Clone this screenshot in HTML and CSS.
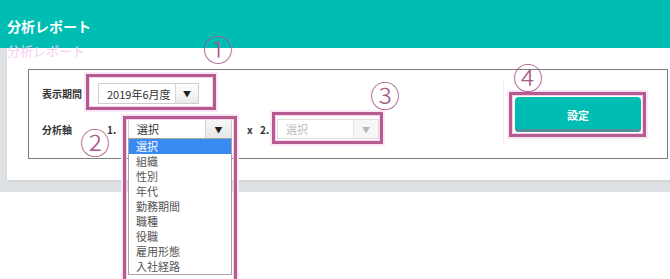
FILE: index.html
```html
<!DOCTYPE html>
<html lang="ja">
<head>
    <meta charset="UTF-8">
    <meta name="viewport" content="width=device-width, initial-scale=1.0">
    <title>分析レポート</title>
    <link rel="stylesheet" href="styles.css">
</head>
<body>
    <header class="top-bar">
        <h1>分析レポート</h1>
    </header>
    <div class="ghost-title">分析レポート</div>

    <main class="page">
        <section class="card">
            <div class="filter-box">
                <div class="filter-rows">
                    <div class="row">
                        <span class="label">表示期間</span>
                        <div class="select period mark mark-1">
                            <span class="value">2019年6月度</span>
                            <span class="arrow">&#9660;</span>
                        </div>
                    </div>
                    <div class="row">
                        <span class="label">分析軸</span>
                        <span class="num">1.</span>
                        <div class="axis-one mark mark-2">
                            <div class="select axis">
                                <span class="value">選択</span>
                                <span class="arrow">&#9660;</span>
                            </div>
                            <ul class="options">
                                <li class="active">選択</li>
                                <li>組織</li>
                                <li>性別</li>
                                <li>年代</li>
                                <li>勤務期間</li>
                                <li>職種</li>
                                <li>役職</li>
                                <li>雇用形態</li>
                                <li>入社経路</li>
                            </ul>
                        </div>
                        <span class="times">x</span>
                        <span class="num num-two">2.</span>
                        <div class="select axis disabled mark mark-3">
                            <span class="value">選択</span>
                            <span class="arrow">&#9660;</span>
                        </div>
                    </div>
                </div>
                <div class="actions">
                    <button class="submit mark mark-4">設定</button>
                </div>
            </div>
        </section>
    </main>

    <span class="step step-1">①</span>
    <span class="step step-2">②</span>
    <span class="step step-3">③</span>
    <span class="step step-4">④</span>
</body>
</html>
```

FILE: styles.css
```css
body {
    margin: 0;
    font-family: "Noto Sans CJK JP", "Open Sans", sans-serif;
    color: #333;
    background: #fff;
    position: relative;
    min-height: 279px;
}

.top-bar {
    background: #00bdb4;
    height: 48px;
    padding-left: 7px;
    box-sizing: border-box;
}

.top-bar h1 {
    margin: 0;
    font-size: 14px;
    line-height: 52px;
    color: #fff;
    font-weight: bold;
}

.ghost-title {
    position: absolute;
    top: 44px;
    left: 7px;
    font-size: 13px;
    line-height: 14px;
    color: #f8cdf1;
    z-index: 2;
}

.page {
    background: #dde1e3;
    padding: 0 0 12px 7px;
}

.card {
    background: #fff;
    padding: 21px 2px 21px 21px;
    box-shadow: 0 1px 2px rgba(0, 0, 0, 0.08);
}

.filter-box {
    border: 1px solid #7d7d7d;
    height: 90px;
    box-sizing: border-box;
    display: flex;
}

.filter-rows {
    flex: 1;
    padding: 13px 0 0 13px;
    display: flex;
    flex-direction: column;
    gap: 15px;
}

.row {
    display: flex;
    align-items: center;
    white-space: nowrap;
}

.label {
    width: 56px;
    font-size: 10px;
    font-weight: bold;
    color: #333;
}

.num {
    width: 21px;
    margin-left: 9px;
    font-size: 10px;
    font-weight: bold;
    color: #333;
}

.num-two {
    width: 17px;
    margin-left: 0;
}

.times {
    width: 13px;
    margin-left: 15px;
    font-size: 10px;
    font-weight: bold;
}

.select {
    display: flex;
    align-items: stretch;
    border: 1px solid #cfcfcf;
    background: #fff;
    box-sizing: border-box;
    font-size: 11px;
}

.select .value {
    flex: 1;
    padding-left: 8px;
    display: flex;
    align-items: center;
    color: #333;
    white-space: nowrap;
}

.select .arrow {
    width: 22px;
    border-left: 1px solid #d6d6d6;
    background: linear-gradient(#ffffff, #e9e9e9);
    display: flex;
    align-items: center;
    justify-content: center;
    font-size: 8px;
    color: #222;
}

.period {
    width: 101px;
    height: 21px;
}

.axis {
    width: 104px;
    height: 20px;
    font-size: 11px;
}

.axis .arrow {
    width: 25px;
    background: linear-gradient(#f7f7f7, #e6e6e6);
}

.axis-one {
    position: relative;
}

.disabled {
    width: 102px;
    border-color: #dedede;
}

.disabled .value {
    color: #bdbdbd;
}

.disabled .arrow {
    width: 24px;
    color: #b5b5b5;
    background: #f6f6f6;
    border-left-color: #e6e6e6;
}

.options {
    position: absolute;
    top: 19px;
    left: 0;
    width: 104px;
    box-sizing: border-box;
    margin: 0;
    padding: 0;
    list-style: none;
    background: #fff;
    border: 1px solid #a5a5a5;
    z-index: 3;
}

.options li {
    height: 15px;
    line-height: 15px;
    padding-left: 7px;
    font-size: 11px;
    color: #555;
}

.options li.active {
    background: #3a8af4;
    color: #fff;
}

.actions {
    width: 152px;
    margin-top: 10px;
    height: 63px;
    border-left: 1px solid #ececec;
    padding-left: 11px;
}

.submit {
    margin-top: 17px;
    width: 126px;
    height: 35px;
    border: none;
    border-radius: 4px;
    background: #00bdb4;
    box-shadow: inset 0 -3px 0 #4f8f9c;
    color: #fff;
    font-family: inherit;
    font-size: 11px;
    font-weight: bold;
}

/* annotation frames */
.mark {
    position: relative;
}

.mark::after {
    content: "";
    position: absolute;
    border: 3px solid #b65b90;
    box-shadow: inset 0 0 0 1px #f6d3ea, 0 0 0 2px #fbe6f5;
    pointer-events: none;
    z-index: 4;
}

.mark-1::after {
    top: -10px;
    bottom: -7px;
    left: -13px;
    right: -18px;
}

.mark-2::after {
    top: -3px;
    left: -5px;
    right: -5px;
    height: 162px;
}

.mark-3::after {
    top: -8px;
    bottom: -6px;
    left: -6px;
    right: -5px;
}

.mark-4::after {
    top: -5px;
    bottom: -5px;
    left: -6px;
    right: -5px;
}

.step {
    position: absolute;
    font-size: 30px;
    line-height: 30px;
    width: 30px;
    text-align: center;
    color: #a9588a;
    font-weight: 300;
    z-index: 5;
}

.step-1 {
    left: 203px;
    top: 33px;
}

.step-2 {
    left: 80px;
    top: 126px;
}

.step-3 {
    left: 370px;
    top: 79px;
}

.step-4 {
    left: 513px;
    top: 61px;
}
```
